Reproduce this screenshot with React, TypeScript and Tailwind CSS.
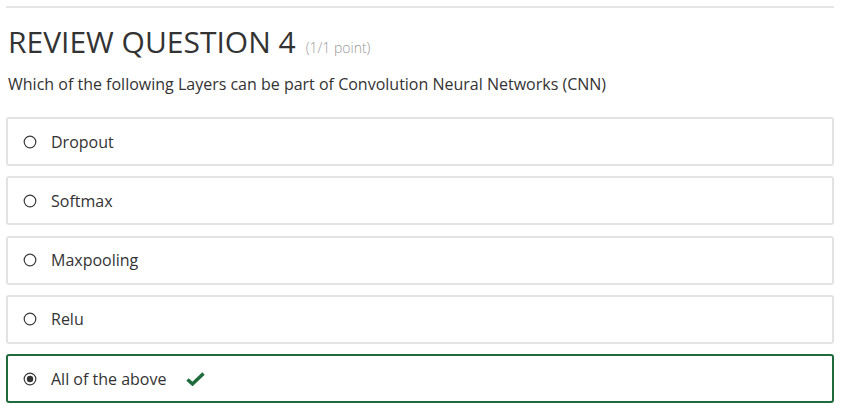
import React from 'react';

const options = ['Dropout', 'Softmax', 'Maxpooling', 'Relu', 'All of the above'];
const selected = 4;

function Radio({ checked }: { checked: boolean }) {
  return (
    <svg width="14" height="14" viewBox="0 0 14 14" className="shrink-0">
      <circle cx="7" cy="7" r="5.8" fill="#fff" stroke="#3a3a3a" strokeWidth="1.2" />
      {checked && <circle cx="7" cy="7" r="3.2" fill="#333" />}
    </svg>
  );
}

export default function App() {
  return (
    <div className="w-[842px] h-[416px] bg-white overflow-hidden px-[6px] pt-[6px]" style={{ fontFamily: '"Open Sans", sans-serif' }}>
      <div className="border-t-2 border-[#e5e5e5] w-[828px]" />
      <h2 className="mt-[14px] pl-[2px] text-[30px] leading-[40px] text-[#333] flex items-baseline">
        REVIEW QUESTION 4
        <span className="ml-[10px] text-[14px] font-light text-[#999]">(1/1 point)</span>
      </h2>
      <p className="mt-[5px] pl-[2px] text-[16px] leading-[22px] text-[#333]">
        Which of the following Layers can be part of Convolution Neural Networks (CNN)
      </p>
      <div className="mt-[22px] flex flex-col gap-[10.25px] w-[828px]">
        {options.map((o, i) => {
          const on = i === selected;
          return (
            <div
              key={o}
              className={`h-[49px] rounded-[3px] border-2 flex items-center pl-[15px] gap-[14px] text-[16px] text-[#333] ${
                on ? 'border-[#1e6b3c]' : 'border-[#e3e3e3]'
              }`}
            >
              <Radio checked={on} />
              <span>{o}</span>
              {on && (
                <svg width="19" height="14" viewBox="0 0 19 14" className="ml-[6px]">
                  <path d="M1.5 7.5 L6.5 12 L17.5 1.5" fill="none" stroke="#1e6b3c" strokeWidth="3.4" />
                </svg>
              )}
            </div>
          );
        })}
      </div>
    </div>
  );
}
